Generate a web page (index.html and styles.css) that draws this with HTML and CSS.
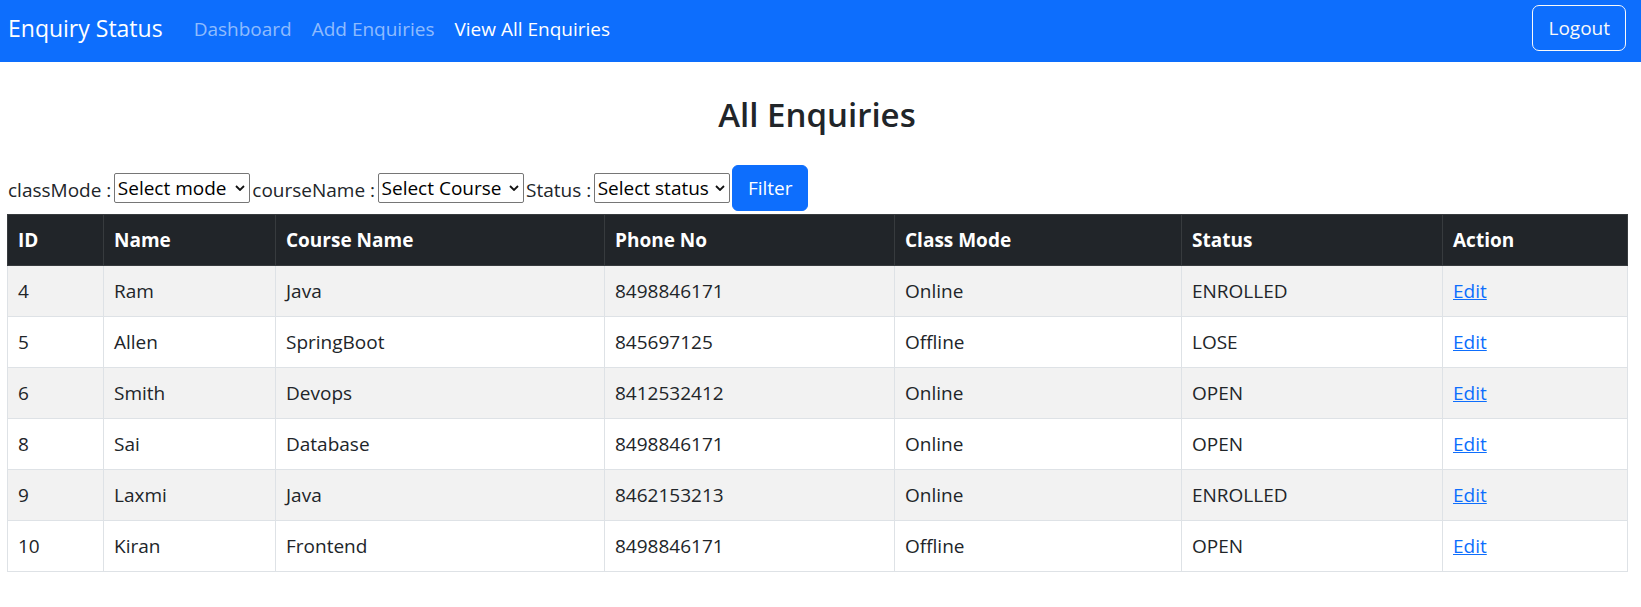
FILE: index.html
```html
<!DOCTYPE html>
<html lang="en">
<head>
<meta charset="utf-8">
<title>Enquiry Status</title>
<link rel="stylesheet" href="styles.css">
</head>
<body>
<nav class="navbar">
  <a class="brand" href="#">Enquiry Status</a>
  <ul class="nav-links">
    <li><a class="nav-link" href="#">Dashboard</a></li>
    <li><a class="nav-link" href="#">Add Enquiries</a></li>
    <li><a class="nav-link active" href="#">View All Enquiries</a></li>
  </ul>
  <a class="btn-logout" href="#">Logout</a>
</nav>

<main class="page">
  <h2 class="title">All Enquiries</h2>

  <form class="filters">
    <label class="filter-label">classMode :</label>
    <span class="select-wrap w-mode">
      <select class="select"><option>Select mode</option></select>
      <svg class="chev" viewBox="0 0 10 6" width="10" height="6"><path d="M1 1l4 4 4-4" fill="none" stroke="#111" stroke-width="1.8"/></svg>
    </span>
    <label class="filter-label">courseName :</label>
    <span class="select-wrap w-course">
      <select class="select"><option>Select Course</option></select>
      <svg class="chev" viewBox="0 0 10 6" width="10" height="6"><path d="M1 1l4 4 4-4" fill="none" stroke="#111" stroke-width="1.8"/></svg>
    </span>
    <label class="filter-label">Status :</label>
    <span class="select-wrap w-status">
      <select class="select"><option>Select status</option></select>
      <svg class="chev" viewBox="0 0 10 6" width="10" height="6"><path d="M1 1l4 4 4-4" fill="none" stroke="#111" stroke-width="1.8"/></svg>
    </span>
    <button type="button" class="btn-filter">Filter</button>
  </form>

  <table class="table">
    <colgroup>
      <col class="c-id"><col class="c-name"><col class="c-course"><col class="c-phone"><col class="c-mode"><col class="c-status"><col class="c-action">
    </colgroup>
    <thead>
      <tr><th>ID</th><th>Name</th><th>Course Name</th><th>Phone No</th><th>Class Mode</th><th>Status</th><th>Action</th></tr>
    </thead>
    <tbody>
      <tr><td>4</td><td>Ram</td><td>Java</td><td>8498846171</td><td>Online</td><td>ENROLLED</td><td><a class="edit" href="#">Edit</a></td></tr>
      <tr><td>5</td><td>Allen</td><td>SpringBoot</td><td>845697125</td><td>Offline</td><td>LOSE</td><td><a class="edit" href="#">Edit</a></td></tr>
      <tr><td>6</td><td>Smith</td><td>Devops</td><td>8412532412</td><td>Online</td><td>OPEN</td><td><a class="edit" href="#">Edit</a></td></tr>
      <tr><td>8</td><td>Sai</td><td>Database</td><td>8498846171</td><td>Online</td><td>OPEN</td><td><a class="edit" href="#">Edit</a></td></tr>
      <tr><td>9</td><td>Laxmi</td><td>Java</td><td>8462153213</td><td>Online</td><td>ENROLLED</td><td><a class="edit" href="#">Edit</a></td></tr>
      <tr><td>10</td><td>Kiran</td><td>Frontend</td><td>8498846171</td><td>Offline</td><td>OPEN</td><td><a class="edit" href="#">Edit</a></td></tr>
    </tbody>
  </table>
</main>
</body>
</html>
```

FILE: styles.css
```css
* { box-sizing: border-box; }

body {
  margin: 0;
  font-family: "Open Sans", "Noto Sans", sans-serif;
  font-size: 19px;
  color: #212529;
  background: #fff;
}

a { text-decoration: none; }

.navbar {
  height: 62px;
  background: #0d6efd;
  display: flex;
  align-items: center;
  padding: 0 15px 7px 8px;
}

.brand {
  font-size: 23px;
  line-height: 1.5;
  color: #fff;
  margin-right: 21px;
  padding-top: 2px;
}

.nav-links {
  list-style: none;
  margin: 0;
  padding: 2px 0 0;
  display: flex;
  flex: 1;
}

.nav-link {
  display: block;
  padding: 0 10px;
  line-height: 30px;
  color: rgba(255, 255, 255, 0.55);
}

.nav-link.active { color: #fff; }

.btn-logout {
  display: block;
  color: #f8f9fa;
  border: 1px solid #f8f9fa;
  border-radius: 7px;
  padding: 0 15px;
  line-height: 44px;
  height: 46px;
}

.page {
  padding: 0 14px 0 7px;
}

.title {
  margin: 32px 0 0;
  text-align: center;
  font-size: 33px;
  font-weight: 600;
  line-height: 41px;
}

.filters {
  display: flex;
  align-items: center;
  gap: 2.5px;
  margin: 30px 0 3px 1px;
  height: 46px;
}

.filter-label {
  line-height: 28px;
  padding-top: 3px;
}

.select-wrap {
  position: relative;
  display: block;
  height: 30px;
}

.w-mode { width: 136px; }
.w-course { width: 146px; }
.w-status { width: 136px; }

.select {
  -webkit-appearance: none;
  appearance: none;
  width: 100%;
  height: 30px;
  margin: 0;
  padding: 0 16px 0 3px;
  border: 1px solid #767676;
  border-radius: 2px;
  background: #fff;
  font-family: "Open Sans", "Noto Sans", sans-serif;
  font-size: 19px;
  color: #000;
}

.chev {
  position: absolute;
  right: 5px;
  top: 12px;
  pointer-events: none;
}

.btn-filter {
  height: 46px;
  width: 76px;
  border: 1px solid #0d6efd;
  border-radius: 6px;
  background: #0d6efd;
  color: #fff;
  font-family: "Open Sans", "Noto Sans", sans-serif;
  font-size: 19px;
  padding: 0;
}

.table {
  width: 100%;
  table-layout: fixed;
  border-collapse: collapse;
  border: 1px solid #dee2e6;
}

.c-id { width: 96px; }
.c-name { width: 172px; }
.c-course { width: 329px; }
.c-phone { width: 290px; }
.c-mode { width: 287px; }
.c-status { width: 261px; }
.c-action { width: 185px; }

.table th,
.table td {
  height: 51px;
  padding: 0 10px;
  text-align: left;
  vertical-align: middle;
  line-height: 30px;
  white-space: nowrap;
}

.table th {
  background: #212529;
  color: #fff;
  font-weight: 700;
  border: 1px solid #373b3e;
}

.table td {
  border: 1px solid #dee2e6;
  color: #212529;
}

.table tbody tr:nth-child(odd) td { background: #f2f2f2; }

.edit {
  color: #0d6efd;
  text-decoration: underline;
}
```
